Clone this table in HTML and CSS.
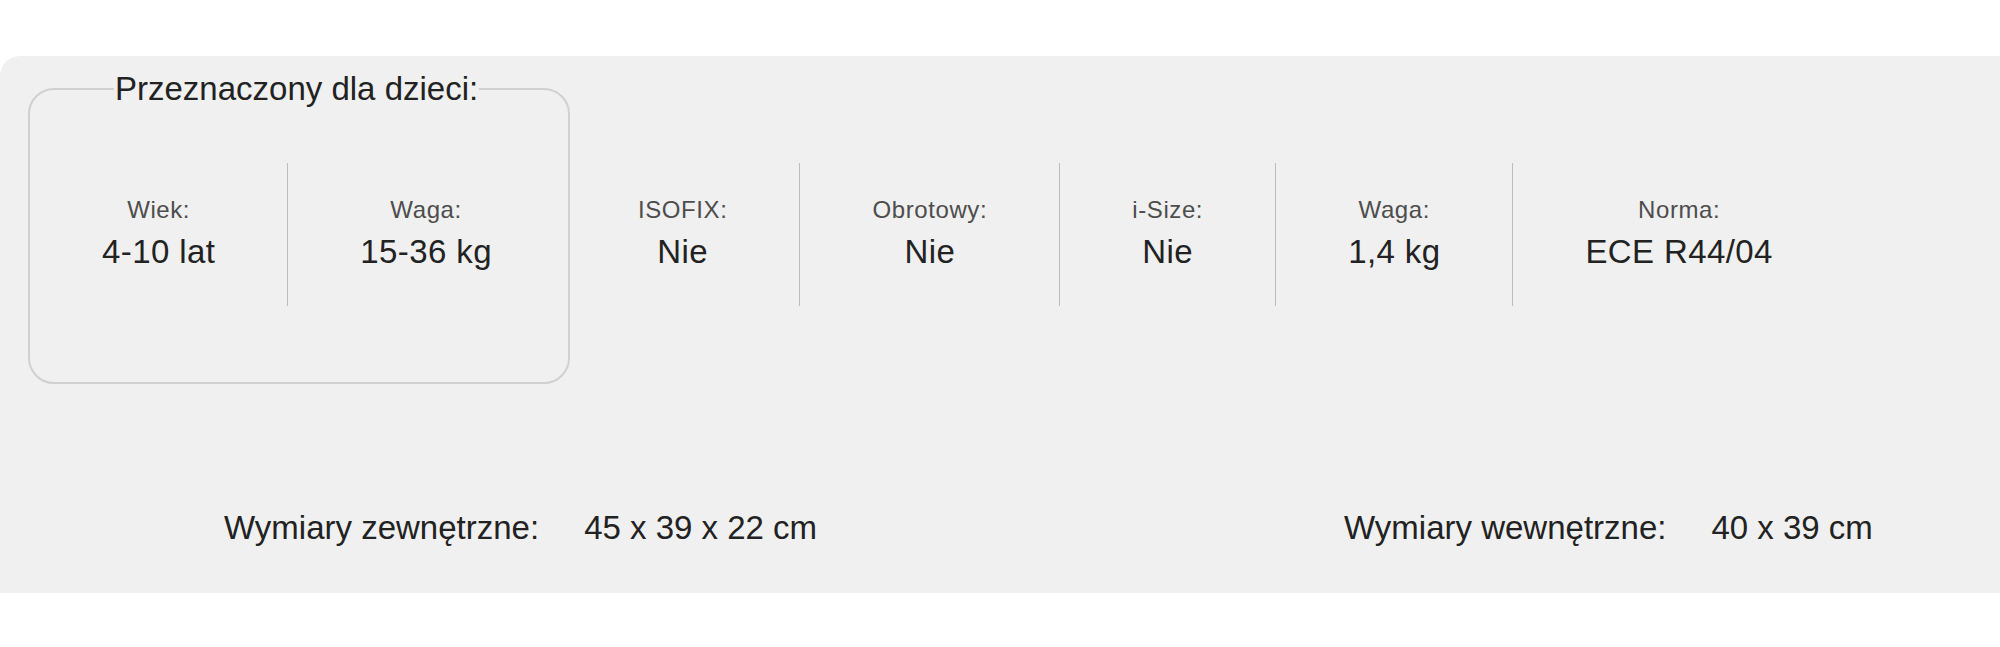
FILE: index.html
```html
<!DOCTYPE html>
<html lang="pl">
<head>
<meta charset="utf-8">
<title>Fotelik - parametry</title>
<link rel="stylesheet" href="styles.css">
</head>
<body>
<section class="panel">
  <div class="specs">
    <fieldset class="child-box">
      <legend class="child-legend">Przeznaczony dla dzieci:</legend>
      <div class="child-cols">
        <div class="spec">
          <div class="spec-label">Wiek:</div>
          <div class="spec-value">4-10 lat</div>
        </div>
        <div class="spec spec-sep">
          <div class="spec-label">Waga:</div>
          <div class="spec-value">15-36 kg</div>
        </div>
      </div>
    </fieldset>
    <div class="other-cols">
      <div class="spec spec-lead">
        <div class="spec-label">ISOFIX:</div>
        <div class="spec-value">Nie</div>
      </div>
      <div class="spec spec-sep">
        <div class="spec-label">Obrotowy:</div>
        <div class="spec-value">Nie</div>
      </div>
      <div class="spec spec-sep">
        <div class="spec-label">i-Size:</div>
        <div class="spec-value">Nie</div>
      </div>
      <div class="spec spec-sep">
        <div class="spec-label">Waga:</div>
        <div class="spec-value">1,4 kg</div>
      </div>
      <div class="spec spec-sep">
        <div class="spec-label">Norma:</div>
        <div class="spec-value">ECE R44/04</div>
      </div>
    </div>
  </div>
  <div class="dims">
    <div class="dim">
      <span class="dim-label">Wymiary zewnętrzne:</span>
      <span class="dim-value">45 x 39 x 22 cm</span>
    </div>
    <div class="dim">
      <span class="dim-label">Wymiary wewnętrzne:</span>
      <span class="dim-value">40 x 39 cm</span>
    </div>
  </div>
</section>
</body>
</html>
```

FILE: styles.css
```css
html, body {
  margin: 0;
  padding: 0;
  background: #ffffff;
}

body {
  font-family: "Liberation Sans", Arial, sans-serif;
  color: #222222;
}

.panel {
  margin-top: 56px;
  height: 537px;
  box-sizing: border-box;
  background: #f0f0f0;
  border-top-left-radius: 20px;
  padding: 14px 0 0 28px;
}

.specs {
  display: flex;
  align-items: flex-start;
}

.child-box {
  margin: 0;
  padding: 0;
  border: 2px solid #d0d0d0;
  border-radius: 26px;
  min-width: 0;
}

.child-legend {
  margin-left: 84px;
  padding: 0 1px;
  font-size: 33px;
  line-height: 38px;
  color: #222222;
}

.child-cols {
  display: flex;
  padding: 55px 4px 76px 0;
}

.other-cols {
  display: flex;
  margin-top: 93px;
}

.spec {
  display: flex;
  flex-direction: column;
  align-items: center;
  padding: 33px 72px 35px;
  white-space: nowrap;
}

.spec-lead {
  padding-left: 68px;
}

.spec-sep {
  border-left: 1px solid #bdbdbd;
}

.spec-label {
  font-size: 24px;
  line-height: 28px;
  letter-spacing: 0.6px;
  color: #4d4d4d;
}

.spec-value {
  margin-top: 9px;
  font-size: 33px;
  line-height: 38px;
  letter-spacing: 0.4px;
  color: #222222;
}

.dims {
  display: grid;
  grid-template-columns: 1120px auto;
  padding-left: 196px;
  margin-top: 125px;
}

.dim {
  display: flex;
  gap: 45px;
  font-size: 33px;
  line-height: 38px;
  white-space: nowrap;
}

.dim-label,
.dim-value {
  color: #222222;
}
```
